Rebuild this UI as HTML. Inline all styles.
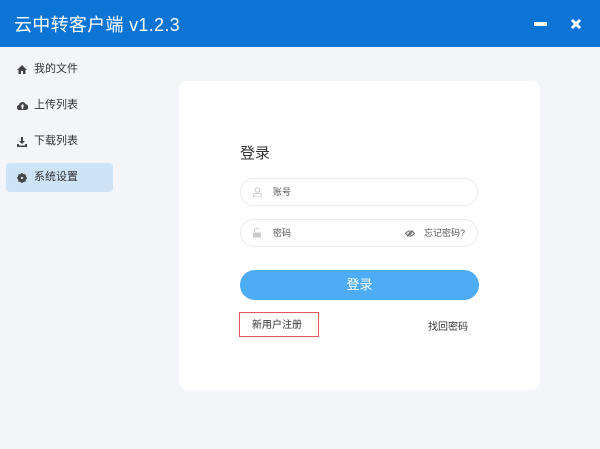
<!DOCTYPE html>
<html><head><meta charset="utf-8"><style>
*{margin:0;padding:0;box-sizing:border-box}
body{width:600px;height:449px;background:#f3f5f8;font-family:"Liberation Sans","Noto Sans CJK SC",sans-serif;position:relative;overflow:hidden}
.hd{position:absolute;left:0;top:0;width:600px;height:47px;background:#0b74d5;color:#fff}
.title{position:absolute;left:14px;top:11px;font-size:18px;letter-spacing:0.3px}
.nav{position:absolute;left:6px;width:107px;height:29px;font-size:11px;color:#333;line-height:29px;padding-left:28px;border-radius:4px}
.nav.act{background:#cfe3f7}
.nav svg{position:absolute;left:11px;top:10px}
.card{position:absolute;left:179px;top:81px;width:361px;height:309px;background:#fff;border-radius:8px}
.inp{position:absolute;left:240px;width:238px;height:28px;border:1px solid #e8eaee;border-radius:14px;font-size:9px;color:#555;line-height:26px}
</style></head><body>
<div class="hd"><div class="title">云中转客户端 v1.2.3</div>
<div style="position:absolute;left:534px;top:22px;width:13px;height:4px;background:#fff"></div>
<svg style="position:absolute;left:570px;top:18px" width="12" height="12" viewBox="0 0 12 12"><path d="M2 2L10 10M10 2L2 10" stroke="#fff" stroke-width="3"/></svg></div>
<div class="nav" style="top:55px"><svg width="10" height="9" viewBox="0 0 10 9"><path d="M0 5L5 0L10 5H8.5V9H6V6H4V9H1.5V5Z" fill="#444"/></svg>我的文件</div>
<div class="nav" style="top:91px"><svg width="11" height="9" viewBox="0 0 11 9"><path d="M2.5 9A2.5 2.5 0 0 1 2 4A3.5 3.5 0 0 1 8.7 3.3A2.8 2.8 0 0 1 8.5 9Z" fill="#444"/><path d="M5.5 3L3.5 5.5H4.8V8H6.2V5.5H7.5Z" fill="#fff"/></svg>上传列表</div>
<div class="nav" style="top:127px"><svg width="10" height="10" viewBox="0 0 10 10"><path d="M4 0H6V4H8L5 7L2 4H4Z M0 7H2V8.5H8V7H10V10H0Z" fill="#444"/></svg>下载列表</div>
<div class="nav act" style="top:163px"><svg width="10" height="10" viewBox="0 0 10 10"><circle cx="5" cy="5" r="3.3" fill="none" stroke="#444" stroke-width="2"/><path d="M5 0V10M0 5H10M1.5 1.5L8.5 8.5M8.5 1.5L1.5 8.5" stroke="#444" stroke-width="1.6"/><circle cx="5" cy="5" r="1.2" fill="#cfe3f7"/></svg>系统设置</div>
<div class="card"></div>
<div style="position:absolute;left:240px;top:142px;font-size:15px;color:#333">登录</div>
<div class="inp" style="top:178px"><svg style="position:absolute;left:12px;top:8px" width="9" height="10" viewBox="0 0 9 10"><circle cx="4.5" cy="3" r="2.3" fill="none" stroke="#ccc"/><path d="M0.5 10V8.5A2 2 0 0 1 2.5 6.5H6.5A2 2 0 0 1 8.5 8.5V10Z" fill="none" stroke="#ccc"/></svg><span style="position:absolute;left:32px">账号</span></div>
<div class="inp" style="top:219px"><svg style="position:absolute;left:12px;top:8px" width="8" height="10" viewBox="0 0 8 10"><path d="M1.5 4V2.5A2 2 0 0 1 5.5 2" fill="none" stroke="#ccc"/><rect x="0" y="4.5" width="8" height="5" fill="#ccc"/></svg><span style="position:absolute;left:32px">密码</span><svg style="position:absolute;left:164px;top:10px" width="10" height="7" viewBox="0 0 10 7"><path d="M0.5 3.5Q5 -1.5 9.5 3.5Q5 8.5 0.5 3.5Z" fill="none" stroke="#666"/><circle cx="5" cy="3.5" r="1.4" fill="#666"/><path d="M2 6.5L8 0.5" stroke="#666"/></svg><span style="position:absolute;left:183px">忘记密码?</span></div>
<div style="position:absolute;left:240px;top:270px;width:239px;height:30px;background:#4eabf5;border-radius:15px;color:#fff;font-size:13px;text-align:center;line-height:30px">登录</div>
<div style="position:absolute;left:239px;top:312px;width:80px;height:25px;border:1px solid #e25a5a;font-size:10px;color:#333;line-height:25px;padding-left:12px">新用户注册</div>
<div style="position:absolute;left:428px;top:318px;font-size:10px;color:#333">找回密码</div>
</body></html>
